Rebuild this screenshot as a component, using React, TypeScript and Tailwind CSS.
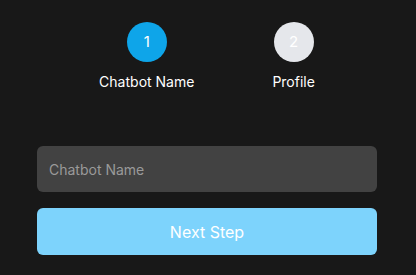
export default function App() {
  return (
    <div
      className="h-[275px] w-[416px] bg-[#181818] pl-[37px] pr-[39px] pt-[22px]"
      style={{ fontFamily: "Inter, 'Noto Sans', sans-serif" }}
    >
      <div className="flex items-start justify-center gap-[78px]">
        <div className="flex flex-col items-center">
          <div className="flex h-10 w-10 items-center justify-center rounded-full bg-[#0ea5e9] text-[15px] text-white">
            1
          </div>
          <span className="mt-[9px] text-[14px] text-white">Chatbot Name</span>
        </div>
        <div className="flex flex-col items-center">
          <div className="flex h-10 w-10 items-center justify-center rounded-full bg-[#e5e7eb] text-[15px] text-white">
            2
          </div>
          <span className="mt-[9px] text-[14px] text-white">Profile</span>
        </div>
      </div>

      <input
        className="mt-[54px] h-[46px] w-full rounded-md bg-[#424242] px-3 text-[14px] text-white outline-none placeholder:text-[#9a9a9a]"
        placeholder="Chatbot Name"
      />
      <button className="mt-[16px] h-[47px] w-full rounded-md bg-[#7dd3fc] text-[16px] text-white">
        Next Step
      </button>
    </div>
  );
}
